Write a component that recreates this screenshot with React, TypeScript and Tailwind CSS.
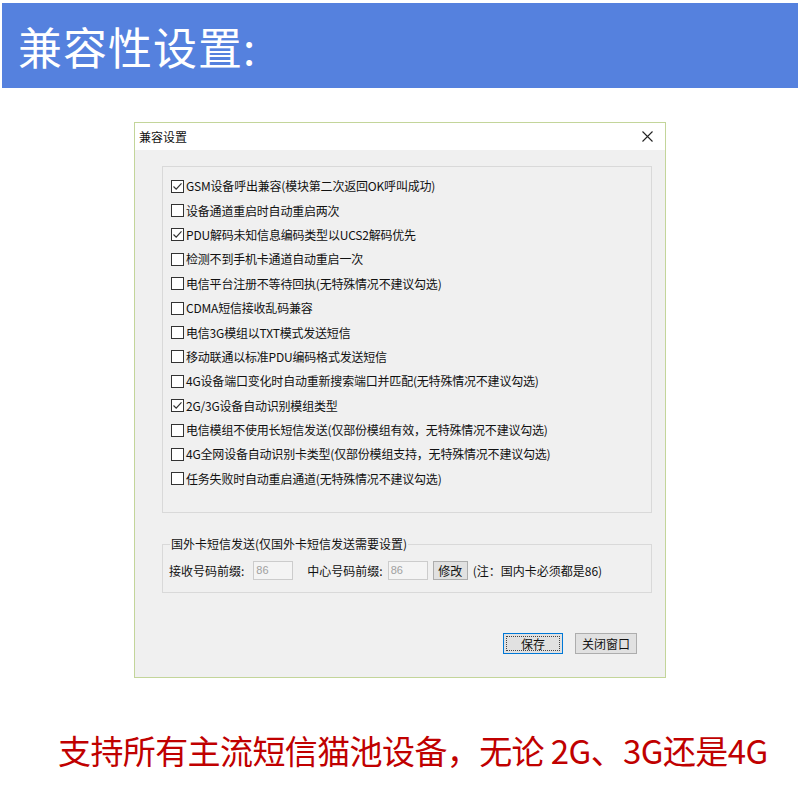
import React from "react";

const items: [string, boolean][] = [
  ["GSM设备呼出兼容(模块第二次返回OK呼叫成功)", true],
  ["设备通道重启时自动重启两次", false],
  ["PDU解码未知信息编码类型以UCS2解码优先", true],
  ["检测不到手机卡通道自动重启一次", false],
  ["电信平台注册不等待回执(无特殊情况不建议勾选)", false],
  ["CDMA短信接收乱码兼容", false],
  ["电信3G模组以TXT模式发送短信", false],
  ["移动联通以标准PDU编码格式发送短信", false],
  ["4G设备端口变化时自动重新搜索端口并匹配(无特殊情况不建议勾选)", false],
  ["2G/3G设备自动识别模组类型", true],
  ["电信模组不使用长短信发送(仅部份模组有效，无特殊情况不建议勾选)", false],
  ["4G全网设备自动识别卡类型(仅部份模组支持，无特殊情况不建议勾选)", false],
  ["任务失败时自动重启通道(无特殊情况不建议勾选)", false],
];

function Box({ checked }: { checked: boolean }) {
  return (
    <svg width="13" height="13" viewBox="0 0 13 13" className="shrink-0">
      <rect x="0.5" y="0.5" width="12" height="12" fill="#ffffff" stroke="#333333" />
      {checked && (
        <path d="M2.5 6.5 L5.2 9.2 L10.5 3.3" fill="none" stroke="#333333" strokeWidth="1.2" />
      )}
    </svg>
  );
}

export default function App() {
  const ui = { fontFamily: '"Noto Sans CJK SC", "Noto Sans", sans-serif' };
  return (
    <div className="w-[800px] h-[800px] bg-white overflow-hidden" style={ui}>
      <div className="mt-[3px] mx-[2px] h-[85px] bg-[#5581de] flex items-center pl-[16px]">
        <span className="text-white text-[44px] leading-none tracking-[1px]">兼容性设置:</span>
      </div>

      <div className="ml-[134px] mt-[34px] w-[532px] h-[556px] border border-[#c3d59a] flex flex-col bg-[#f0f0f0]">
        <div className="h-[27px] bg-white flex items-center justify-between pl-[4px] pr-[12px] shrink-0">
          <span className="text-[12px] text-[#111]">兼容设置</span>
          <svg width="11" height="11" viewBox="0 0 11 11">
            <path d="M0.5 0.5 L10.5 10.5 M10.5 0.5 L0.5 10.5" stroke="#222" strokeWidth="1.1" />
          </svg>
        </div>
        <div className="flex-1 flex flex-col pl-[27px] pr-[12px] pt-[16px]">
          <div className="w-[490px] h-[347px] border border-[#d9d9d9] pt-[7px] pl-[8px] flex flex-col">
            {items.map(([t, c], i) => (
              <div key={i} className="h-[24.4px] flex items-center gap-[2px] shrink-0">
                <Box checked={c} />
                <span className="text-[12px] text-[#111] leading-none tracking-[-0.2px]">{t}</span>
              </div>
            ))}
          </div>

          <fieldset className="mt-[24px] w-[490px] h-[56px] border border-[#d9d9d9] px-[6px]">
            <legend className="text-[12px] text-[#111] px-[1px] ml-[1px] leading-[14px]">
              国外卡短信发送(仅国外卡短信发送需要设置)
            </legend>
            <div className="flex items-center mt-[10px] text-[12px] text-[#111]">
              <span>接收号码前缀:</span>
              <div className="ml-[9px] w-[40px] h-[19px] border border-[#cccccc] bg-[#f4f4f4] text-[#a0a0a0] flex items-center pl-[2px] text-[11px]" style={{ fontFamily: '"Liberation Sans", sans-serif' }}>86</div>
              <span className="ml-[14px]">中心号码前缀:</span>
              <div className="ml-[5px] w-[40px] h-[19px] border border-[#cccccc] bg-[#f4f4f4] text-[#a0a0a0] flex items-center pl-[2px] text-[11px]" style={{ fontFamily: '"Liberation Sans", sans-serif' }}>86</div>
              <div className="ml-[5px] w-[35px] h-[19px] border border-[#adadad] bg-[#e1e1e1] flex items-center justify-center">修改</div>
              <span className="ml-[5px]">(注：国内卡必须都是86)</span>
            </div>
          </fieldset>

          <div className="flex justify-end gap-[12px] mt-[40px] pr-[16px]">
            <div className="w-[60px] h-[21px] border border-[#0078d7] bg-[#e1e1e1] p-[2px]">
              <div className="w-full h-full border border-dotted border-[#444] flex items-center justify-center text-[12px] text-[#111]">保存</div>
            </div>
            <div className="w-[62px] h-[21px] border border-[#adadad] bg-[#e1e1e1] flex items-center justify-center text-[12px] text-[#111]">关闭窗口</div>
          </div>
        </div>
      </div>

      <div className="mt-[52px] pl-[58px] text-[#c00000] text-[33px] leading-[40px] tracking-[-0.6px]">
        支持所有主流短信猫池设备，无论 2G、3G还是4G
      </div>
    </div>
  );
}
